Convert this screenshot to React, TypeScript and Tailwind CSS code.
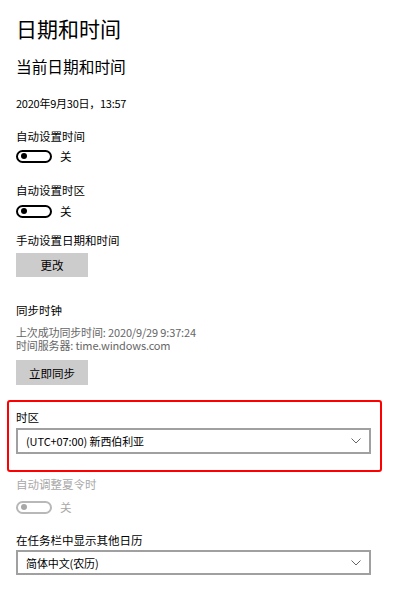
import React from "react";

const font = { fontFamily: '"Noto Sans CJK SC", "Noto Sans", sans-serif' };

function Toggle({ disabled }: { disabled?: boolean }) {
  return (
    <div className="flex items-center h-[20px] gap-[8px]">
      <div
        className={
          "w-[36px] h-[13px] rounded-full border-2 flex items-center pl-[3px] " +
          (disabled ? "border-[#b8b8b8]" : "border-black")
        }
      >
        <div className={"w-[6px] h-[6px] rounded-full " + (disabled ? "bg-[#a8a8a8]" : "bg-black")} />
      </div>
      <span className={"text-[11.5px] leading-[16px] " + (disabled ? "text-[#a8a8a8]" : "text-black")}>关</span>
    </div>
  );
}

function Chevron() {
  return (
    <svg width="10" height="6" viewBox="0 0 10 6" fill="none">
      <path d="M0.5 0.5 L5 5 L9.5 0.5" stroke="#666" strokeWidth="1" />
    </svg>
  );
}

function Select({ text, h }: { text: string; h: string }) {
  return (
    <div className={"w-[355px] border-2 border-[#a0a0a0] bg-white flex items-center justify-between pl-[8px] pr-[8px] " + h}>
      <span className="text-[11px] tracking-[-0.1px] leading-[16px] text-black">{text}</span>
      <Chevron />
    </div>
  );
}

export default function App() {
  return (
    <div className="w-[400px] h-[595px] bg-white pl-[16px] text-black overflow-hidden" style={font}>
      <div className="pt-[14px] text-[21px] leading-[28px]">日期和时间</div>
      <div className="mt-[13px] text-[15.7px] leading-[24px]">当前日期和时间</div>
      <div className="mt-[16px] text-[11px] tracking-[-0.25px] leading-[16px]">2020年9月30日，13:57</div>

      <div className="mt-[17px] text-[11.5px] leading-[16px]">自动设置时间</div>
      <div className="mt-[2px]">
        <Toggle />
      </div>
      <div className="mt-[16px] text-[11.5px] leading-[16px]">自动设置时区</div>
      <div className="mt-[3px]">
        <Toggle />
      </div>
      <div className="mt-[11px] text-[11.5px] leading-[16px]">手动设置日期和时间</div>
      <button className="mt-[5px] w-[72px] h-[24px] bg-[#cccccc] text-[11.5px] leading-[16px] flex items-center justify-center">
        更改
      </button>

      <div className="mt-[25px] text-[11.5px] leading-[16px]">同步时钟</div>
      <div className="mt-[8px] text-[11px] tracking-[-0.15px] leading-[13px] text-[#666666]">
        <div>上次成功同步时间: 2020/9/29 9:37:24</div>
        <div>时间服务器: time.windows.com</div>
      </div>
      <button className="mt-[8px] w-[72px] h-[25px] bg-[#cccccc] text-[11.5px] leading-[16px] flex items-center justify-center">
        立即同步
      </button>

      <div className="mt-[15px] -ml-[9px] w-[375px] h-[72px] border-2 border-[#ff0000] rounded-[3px] pl-[7px] pt-[7px]">
        <div className="text-[11.5px] leading-[16px]">时区</div>
        <div className="mt-[3px]">
          <Select text="(UTC+07:00) 新西伯利亚" h="h-[26px]" />
        </div>
      </div>

      <div className="mt-[4px] text-[11.5px] leading-[16px] text-[#a8a8a8]">自动调整夏令时</div>
      <div className="mt-[5px]">
        <Toggle disabled />
      </div>
      <div className="mt-[15px] text-[11.5px] leading-[16px]">在任务栏中显示其他日历</div>
      <div className="mt-[2px]">
        <Select text="简体中文(农历)" h="h-[25px]" />
      </div>
    </div>
  );
}
